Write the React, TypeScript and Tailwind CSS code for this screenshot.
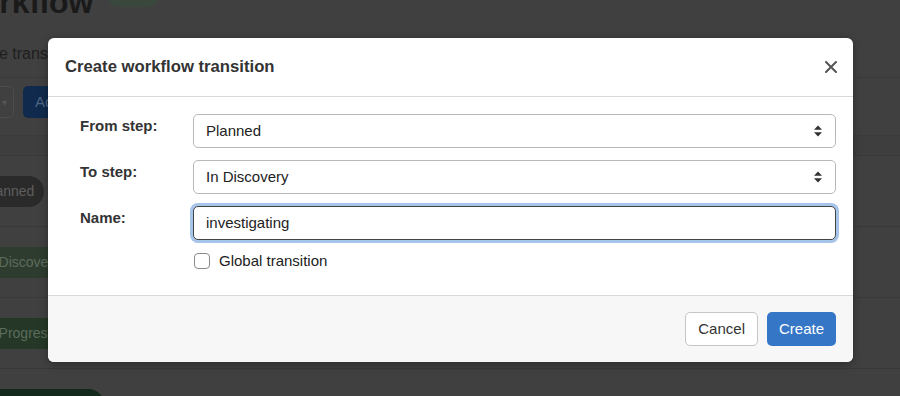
import React from "react";

const steps = [
  { label: "Planned", pill: "bg-[#2a2a2a] text-[#5e5e5e]" },
  { label: "In Discovery", pill: "bg-[#2e3c2f] text-[#5c6b5d]" },
  { label: "In Progress", pill: "bg-[#253827] text-[#5b6c5c]" },
  { label: "Ready for Review", pill: "bg-[#13291b] text-[#3f5346]" },
];

function SortArrows() {
  return (
    <svg width="10" height="12" viewBox="0 0 10 12" className="text-[#333]">
      <path d="M5 0.5 L9 4.8 L1 4.8 Z" fill="currentColor" />
      <path d="M5 11.5 L9 7.2 L1 7.2 Z" fill="currentColor" />
    </svg>
  );
}

function SelectBox({ value }: { value: string }) {
  return (
    <div className="flex h-[34px] flex-1 items-center justify-between rounded-[5px] border border-[#b8b8b8] bg-white pl-[12px] pr-[12px] text-[15px] text-[#222]">
      <span>{value}</span>
      <SortArrows />
    </div>
  );
}

function FieldRow({ label, children }: { label: string; children: React.ReactNode }) {
  return (
    <div className="flex items-start">
      <label className="w-[128px] shrink-0 pl-[15px] pt-[2px] text-[15px] font-bold leading-[20px] text-[#333]">{label}</label>
      {children}
    </div>
  );
}

function BackgroundPage() {
  return (
    <div className="ml-[-50px] w-[1000px]">
      <div className="mt-[-19px] flex items-end gap-[15px]">
        <h1 className="text-[32px] font-bold leading-[38px] text-[#1a1a1a]">Workflow</h1>
        <span className="mb-[14px] h-[26px] w-[50px] rounded-[10px] bg-[#3a473d]" />
      </div>
      <p className="mt-[23px] text-[16px] leading-[20px] text-[#1e1e1e]">Manage transitions between workflow steps.</p>
      <div className="mt-[13px] flex items-center gap-[9px] border-t border-[#3a3a3a] pt-[8px] pb-[17px]">
        <div className="flex h-[32px] w-[64px] items-center justify-end rounded-[5px] border border-[#4c4c4c] pr-[6px] text-[10px] text-[#555]">▾</div>
        <div className="flex h-[32px] items-center rounded-[5px] bg-[#0f2a4c] px-[12px] text-[15px] text-[#4e6480]">Add transition</div>
      </div>
      <div className="border-t border-[#3a3a3a]">
        <div className="h-[20px] border-b border-[#393939] bg-[#3e3e3e]" />
        {steps.map((s) => (
          <div key={s.label} className="flex h-[71px] items-center border-b border-[#393939] pl-[23px]">
            <span className={`flex h-[31px] items-center rounded-full px-[10px] text-[14px] ${s.pill}`}>{s.label}</span>
          </div>
        ))}
      </div>
    </div>
  );
}

export default function App() {
  return (
    <div className="relative h-[396px] w-[900px] overflow-hidden bg-[#404040] font-['Liberation_Sans',Arial,sans-serif]">
      <BackgroundPage />

      <div className="absolute left-[48px] top-[38px] w-[805px] overflow-hidden rounded-[6px] bg-white shadow-[0_2px_10px_rgba(0,0,0,0.3)]">
        <div className="flex h-[59px] items-center justify-between border-b border-[#d9d9d9] px-[17px]">
          <h2 className="text-[16.7px] font-bold text-[#333]">Create workflow transition</h2>
          <svg width="12" height="12" viewBox="0 0 12 12" className="mr-[-1px] text-[#555]">
            <path d="M1 1 L11 11 M11 1 L1 11" stroke="currentColor" strokeWidth="2" strokeLinecap="round" />
          </svg>
        </div>

        <div className="flex flex-col gap-[12px] px-[17px] pt-[17px] pb-[24px]">
          <FieldRow label="From step:">
            <SelectBox value="Planned" />
          </FieldRow>
          <FieldRow label="To step:">
            <SelectBox value="In Discovery" />
          </FieldRow>
          <FieldRow label="Name:">
            <div className="flex h-[34px] flex-1 items-center rounded-[5px] border border-[#444] bg-white pl-[12px] text-[15px] text-[#222] ring-[3px] ring-[#a7c4e9]">
              investigating
            </div>
          </FieldRow>
          <div className="mt-[-1px] flex items-center pl-[129px]">
            <span className="h-[16px] w-[16px] rounded-[4px] border border-[#8a8a8a] bg-white" />
            <span className="ml-[9px] text-[15px] leading-[20px] text-[#222]">Global transition</span>
          </div>
        </div>

        <div className="flex justify-end gap-[9px] border-t border-[#d9d9d9] bg-[#f7f7f7] px-[17px] py-[16px]">
          <button className="h-[34px] rounded-[5px] border border-[#c6c6c6] bg-white px-[12px] text-[15px] text-[#333]">Cancel</button>
          <button className="h-[34px] rounded-[5px] bg-[#3577c6] px-[12px] text-[15px] text-white">Create</button>
        </div>
      </div>
    </div>
  );
}
